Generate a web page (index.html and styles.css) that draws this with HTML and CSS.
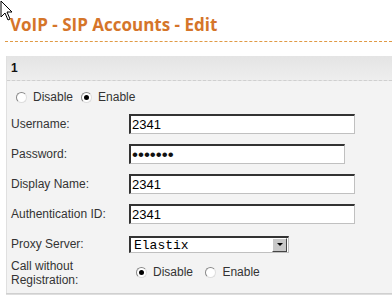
FILE: index.html
```html
<!DOCTYPE html>
<html lang="en">
<head>
    <meta charset="UTF-8">
    <title>VoIP - SIP Accounts - Edit</title>
    <link rel="stylesheet" href="styles.css">
</head>
<body>
    <div class="cursor">
        <svg width="14" height="22" viewBox="0 0 14 22"><path d="M1 1 L1 17 L5 13 L8 20 L10 19 L7 12 L12 12 Z" fill="#fff" stroke="#000" stroke-width="1"/></svg>
    </div>
    <h1 class="page-title">VoIP - SIP Accounts - Edit</h1>
    <div class="panel">
        <div class="panel-head">1</div>
        <div class="panel-body">
            <div class="radio-row">
                <label><input type="radio" name="state"> Disable</label>
                <label><input type="radio" name="state" checked> Enable</label>
            </div>
            <table class="form">
                <tr>
                    <td class="lbl">Username:</td>
                    <td><input class="txt" type="text" value="2341"></td>
                </tr>
                <tr>
                    <td class="lbl">Password:</td>
                    <td><input class="txt pwd" type="password" value="1234567"></td>
                </tr>
                <tr>
                    <td class="lbl">Display Name:</td>
                    <td><input class="txt" type="text" value="2341"></td>
                </tr>
                <tr>
                    <td class="lbl">Authentication ID:</td>
                    <td><input class="txt" type="text" value="2341"></td>
                </tr>
                <tr>
                    <td class="lbl">Proxy Server:</td>
                    <td>
                        <div class="sel">
                            <select><option>Elastix</option></select>
                            <span class="sel-btn"><svg width="6" height="4" viewBox="0 0 6 4"><path d="M0 0 H6 L3 3 Z" fill="#000"/></svg></span>
                        </div>
                    </td>
                </tr>
                <tr class="last">
                    <td class="lbl two">Call without<br>Registration:</td>
                    <td class="radios">
                        <label><input type="radio" name="reg" checked> Disable</label>
                        <label><input type="radio" name="reg"> Enable</label>
                    </td>
                </tr>
            </table>
        </div>
    </div>
    <div class="foot"></div>
</body>
</html>
```

FILE: styles.css
```css
body {
    margin: 0;
    font-family: "Liberation Sans", Arial, sans-serif;
    font-size: 12px;
    color: #333;
    background: #fff;
    overflow: hidden;
}
.cursor {
    position: absolute;
    left: 0;
    top: 0;
}
.page-title {
    margin: 0 0 0 5px;
    padding: 13px 0 0 5px;
    height: 28px;
    font-family: "Open Sans", sans-serif;
    font-size: 17px;
    font-weight: bold;
    color: #d5752a;
    border-bottom: 1px dashed #e09a45;
}
.panel {
    margin: 14px 0 0 6px;
    border-left: 1px solid #e0e0e0;
    background: #f3f3f3;
}
.panel-head {
    height: 24px;
    line-height: 24px;
    padding-left: 4px;
    font-weight: bold;
    color: #111;
    background: linear-gradient(#e4e4e4, #eeeeee);
    border-bottom: 1px dashed #cfcfcf;
}
.panel-body {
    padding: 8px 0 0 3px;
}
.radio-row {
    height: 16px;
    display: flex;
    align-items: center;
    gap: 8px;
    padding-left: 6px;
    margin-bottom: 4px;
}
label {
    display: flex;
    align-items: center;
}
input[type=radio] {
    appearance: none;
    width: 11px;
    height: 11px;
    margin: 0 6px 0 0;
    border-radius: 50%;
    border: 1px solid #888;
    border-right-color: #ddd;
    border-bottom-color: #ddd;
    background: #fff;
    position: relative;
}
input[type=radio]:checked::after {
    content: "";
    position: absolute;
    left: 2px;
    top: 2px;
    width: 5px;
    height: 5px;
    border-radius: 50%;
    background: #000;
}
.form {
    border-collapse: collapse;
}
.form td {
    padding: 0;
    height: 30px;
}
.form .lbl {
    width: 118px;
    padding-left: 1px;
}
.form .last td {
    height: 28px;
    vertical-align: top;
}
.form .two {
    line-height: 14px;
}
.txt {
    box-sizing: border-box;
    width: 226px;
    height: 20px;
    margin: 0;
    padding: 0 1px;
    font-family: "Liberation Sans", Arial, sans-serif;
    font-size: 13px;
    color: #000;
    background: #fff;
    border: 1px solid #c0c0c0;
    border-top: 2px solid #333;
    border-left: 2px solid #333;
    outline: none;
}
.pwd {
    width: 216px;
    font-size: 17px;
    letter-spacing: 0;
    color: #111;
}
.sel {
    position: relative;
    width: 160px;
    height: 17px;
}
.sel select {
    appearance: none;
    box-sizing: border-box;
    width: 160px;
    height: 17px;
    margin: 0;
    padding: 0 3px;
    font-family: "Liberation Mono", "Courier New", monospace;
    font-size: 13px;
    color: #000;
    background: #fff;
    border: 1px solid #c0c0c0;
    border-top: 2px solid #333;
    border-left: 2px solid #333;
    border-radius: 0;
}
.sel-btn {
    position: absolute;
    right: 2px;
    top: 2px;
    width: 13px;
    height: 12px;
    display: flex;
    align-items: center;
    justify-content: center;
    background: #c8c8c8;
    border: 1px solid #fff;
    border-right-color: #444;
    border-bottom-color: #444;
}
.form .radios {
    padding-top: 6px;
}
.radios label {
    display: inline-flex;
    margin-left: 7px;
    margin-right: 2px;
}
.foot {
    height: 10px;
    background: #dedede;
    border-top: 1px solid #d0d0d0;
    margin-left: 6px;
}
```
